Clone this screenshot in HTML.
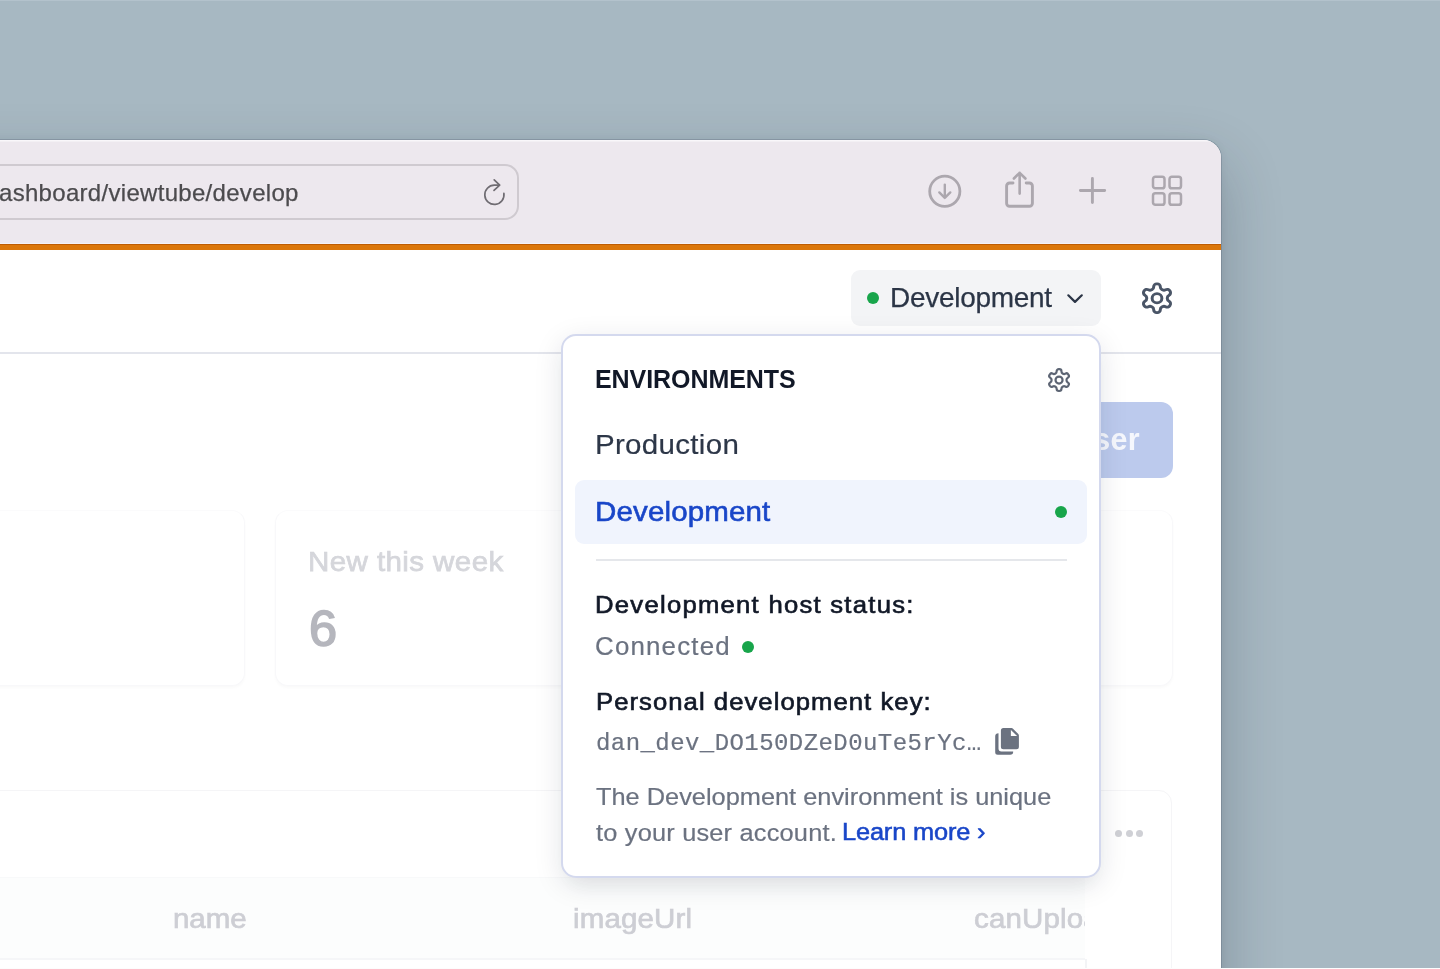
<!DOCTYPE html>
<html>
<head>
<meta charset="utf-8">
<title>Environments</title>
<style>
*{box-sizing:border-box;margin:0;padding:0}
html,body{width:1440px;height:969px;overflow:hidden}
body{background:#a7b8c2;font-family:"Liberation Sans",sans-serif;position:relative}
.t{position:absolute;white-space:pre;line-height:40px;height:40px}
svg{position:absolute;overflow:visible}
.sx{transform-origin:0 50%;transform:scaleX(1.035)}
.t{will-change:transform}
/* window: page coords inside #pg */
#win{position:absolute;left:-200px;top:140px;width:1421px;height:1000px;background:#fff;border-radius:18px 18px 0 0;
 box-shadow:0 0 0 1px rgba(60,75,90,.22),0 26px 60px 2px rgba(20,35,50,.24),0 0 10px rgba(20,35,50,.06)}
#clip{position:absolute;left:0;top:0;width:1421px;height:1000px;border-radius:18px 18px 0 0;overflow:hidden}
#pg{position:absolute;left:200px;top:-140px;width:1221px;height:1140px}
#pg>div,#pop>div{position:absolute}
#toolbar{left:-200px;top:140px;width:1421px;height:104px;background:#ede8ee;box-shadow:inset 0 1.5px 0 #f9f7fa,inset 0 -1px 0 #f4f1f5}
#urlbar{left:-200px;top:164px;width:719px;height:56px;border:2px solid #cfcad0;border-radius:14px}
#orange{left:-200px;top:244px;width:1421px;height:6px;background:#db760a;border-top:1px solid #be5b02}
#header{left:-200px;top:250px;width:1421px;height:104px;background:#fff;border-bottom:2px solid #e3e5ec}
#envbtn{left:851px;top:270px;width:250px;height:56px;border-radius:9px;background:#f3f4f6}
.dot{border-radius:50%;background:#18a54b}
#adduser{left:960px;top:402px;width:213px;height:76px;border-radius:12px;background:#bccaed}
.card{top:510px;height:176px;border-radius:13px;background:#fff;border:1.5px solid #f8f8fa;border-top-color:#fbfbfc;box-shadow:0 2px 3px rgba(0,0,0,.022)}
#tcard{left:-200px;top:790px;width:1372px;height:400px;border-radius:13px;border:1.5px solid #f5f5f7;background:#fff}
#thead{left:-200px;top:877px;width:1285px;height:83px;background:#fcfdfd;border-top:1.5px solid #f8f9fa;border-bottom:2px solid #f5f6f8;overflow:hidden}
/* popup */
#pop{left:561px;top:334px;width:540px;height:544px;border:2px solid #d4d9ee;border-radius:15px;background:#fff;
 box-shadow:0 7px 28px rgba(15,25,50,.115),0 14px 22px -6px rgba(15,25,50,.04)}
#sel{left:12px;top:144px;width:512px;height:64px;border-radius:9px;background:#f0f4fd}
#sep{left:32.5px;top:223.2px;width:471.5px;height:2px;background:#e5e7eb}
</style>
</head>
<body>
<div id="win"><div id="clip"><div id="pg">
  <div id="toolbar"></div>
  <div id="urlbar"></div>
  <div class="t" id="url" style="left:-1.2px;top:173.4px;font-size:24px;letter-spacing:.3px;color:#4c4b4e;-webkit-text-stroke:.25px #4c4b4e">ashboard/viewtube/develop</div>
  <svg style="left:481.7px;top:177.6px" width="26" height="30" viewBox="0 0 26 30" fill="none" stroke="#6f6c72" stroke-width="1.7" stroke-linecap="round" stroke-linejoin="round"><path d="M21.9 15.4A9.6 9.6 0 1 1 12.3 7.2H17"/><path d="M12.2 1.9 17.7 7.2 12 12.4"/></svg>
  <!-- toolbar icons -->
  <svg style="left:927px;top:173px" width="36" height="36" viewBox="0 0 36 36" fill="none" stroke="#aca7ae" stroke-linecap="round" stroke-linejoin="round"><circle cx="17.8" cy="18.3" r="15.1" stroke-width="2.8"/><path stroke-width="2.4" d="M17.8 11.6V24.8M12.3 19.4l5.5 5.5 5.5-5.5"/></svg>
  <svg style="left:1003px;top:169px" width="34" height="40" viewBox="0 0 34 40" fill="none" stroke="#aca7ae" stroke-linecap="round" stroke-linejoin="round"><path stroke-width="2.9" d="M10 14H6.6a3 3 0 0 0-3 3v17.3a3 3 0 0 0 3 3h19.8a3 3 0 0 0 3-3V17a3 3 0 0 0-3-3H23.2"/><path stroke-width="2.6" d="M16.65 24.6V3.9M10.9 9.5l5.75-5.7 5.75 5.7"/></svg>
  <svg style="left:1078px;top:176px" width="30" height="30" viewBox="0 0 30 30" fill="none" stroke="#aca7ae" stroke-width="2.9" stroke-linecap="round"><path d="M2.4 14.5h24.3M14.4 2.5v24"/></svg>
  <svg style="left:1151px;top:175px" width="32" height="32" viewBox="0 0 32 32" fill="none" stroke="#aca7ae" stroke-width="2.5"><rect x="2" y="1.8" width="11.5" height="11.5" rx="2.4"/><rect x="18.5" y="1.8" width="11.5" height="11.5" rx="2.4"/><rect x="2" y="18.3" width="11.5" height="11.5" rx="2.4"/><rect x="18.5" y="18.3" width="11.5" height="11.5" rx="2.4"/></svg>
  <div id="orange"></div>
  <div id="header"></div>
  <div id="envbtn"></div>
  <div class="dot" style="left:867px;top:292px;width:12px;height:12px"></div>
  <div class="t" id="hdev" style="left:890.3px;top:278.1px;font-size:28px;letter-spacing:-0.29px;color:#2b3546;-webkit-text-stroke:.25px #2b3546">Development</div>
  <svg style="left:1065px;top:290px" width="20" height="16" viewBox="0 0 20 16" fill="none" stroke="#2b3546" stroke-width="2.2" stroke-linecap="round" stroke-linejoin="round"><path d="M3.3 5.3 10 11.9l6.8-6.6"/></svg>
  <svg id="gearbig" preserveAspectRatio="none" style="left:1138.90px;top:280.50px" width="36.0" height="34.5" viewBox="0 0 24 24" fill="none" stroke="#4a5567" stroke-width="2" stroke-linecap="round" stroke-linejoin="round"><path d="M12.22 2h-.44a2 2 0 0 0-2 2v.18a2 2 0 0 1-1 1.73l-.43.25a2 2 0 0 1-2 0l-.15-.08a2 2 0 0 0-2.73.73l-.22.38a2 2 0 0 0 .73 2.73l.15.1a2 2 0 0 1 1 1.72v.51a2 2 0 0 1-1 1.74l-.15.09a2 2 0 0 0-.73 2.73l.22.38a2 2 0 0 0 2.73.73l.15-.08a2 2 0 0 1 2 0l.43.25a2 2 0 0 1 1 1.73V20a2 2 0 0 0 2 2h.44a2 2 0 0 0 2-2v-.18a2 2 0 0 1 1-1.73l.43-.25a2 2 0 0 1 2 0l.15.08a2 2 0 0 0 2.73-.73l.22-.39a2 2 0 0 0-.73-2.73l-.15-.08a2 2 0 0 1-1-1.74v-.5a2 2 0 0 1 1-1.74l.15-.09a2 2 0 0 0 .73-2.73l-.22-.38a2 2 0 0 0-2.73-.73l-.15.08a2 2 0 0 1-2 0l-.43-.25a2 2 0 0 1-1-1.73V4a2 2 0 0 0-2-2z"/><circle cx="12" cy="12" r="3.25"/></svg>

  <!-- page content (faded) -->
  <div id="adduser"></div>
  <div class="t" id="adduser_t" style="left:939.2px;top:419.1px;width:201px;text-align:right;font-size:30.5px;letter-spacing:.3px;font-weight:700;color:#f5f7fd">Add user</div>
  <div class="card" style="left:-200px;width:445px"></div>
  <div class="card" style="left:275px;width:434px"></div>
  <div class="card" style="left:739px;width:434px"></div>
  <div class="t sx" id="ntw" style="left:308.2px;top:540.8px;font-size:28.5px;letter-spacing:0.41px;color:#d5d6db;-webkit-text-stroke:.75px #d5d6db">New this week</div>
  <div class="t" id="six" style="left:308.8px;top:609.3px;font-size:50.5px;color:#b5b6bd;-webkit-text-stroke:1.6px #b5b6bd">6</div>
  <div id="tcard"></div>
  <div class="dot" style="left:1115px;top:829.9px;width:7px;height:7px;background:#cfd0d5"></div>
  <div class="dot" style="left:1125.6px;top:829.9px;width:7px;height:7px;background:#cfd0d5"></div>
  <div class="dot" style="left:1136.2px;top:829.9px;width:7px;height:7px;background:#cfd0d5"></div>
  <div style="left:1085px;top:959px;width:1.5px;height:20px;background:#f3f4f6"></div>
  <div id="thead">
    <div class="t sx" id="th1" style="left:372.6px;top:19.6px;font-size:28.5px;letter-spacing:-0.08px;color:#cdced4;-webkit-text-stroke:.7px #cdced4">name</div>
    <div class="t sx" id="th2" style="left:772.6px;top:20.2px;font-size:28.5px;letter-spacing:0.15px;color:#cdced4;-webkit-text-stroke:.7px #cdced4">imageUrl</div>
    <div class="t sx" id="th3" style="left:1173.8px;top:20.2px;font-size:28.5px;letter-spacing:0.15px;color:#cdced4;-webkit-text-stroke:.7px #cdced4">canUpload</div>
  </div>

  <!-- popup -->
  <div id="pop">
    <div class="t" id="envs" style="left:32.0px;top:23.1px;font-size:25px;font-weight:700;letter-spacing:-0.07px;color:#111827">ENVIRONMENTS</div>
    <svg id="gearsm" preserveAspectRatio="none" style="left:482.95px;top:30.80px" width="26.1" height="26.2" viewBox="0 0 24 24" fill="none" stroke="#5d6574" stroke-width="2" stroke-linecap="round" stroke-linejoin="round"><path d="M12.22 2h-.44a2 2 0 0 0-2 2v.18a2 2 0 0 1-1 1.73l-.43.25a2 2 0 0 1-2 0l-.15-.08a2 2 0 0 0-2.73.73l-.22.38a2 2 0 0 0 .73 2.73l.15.1a2 2 0 0 1 1 1.72v.51a2 2 0 0 1-1 1.74l-.15.09a2 2 0 0 0-.73 2.73l.22.38a2 2 0 0 0 2.73.73l.15-.08a2 2 0 0 1 2 0l.43.25a2 2 0 0 1 1 1.73V20a2 2 0 0 0 2 2h.44a2 2 0 0 0 2-2v-.18a2 2 0 0 1 1-1.73l.43-.25a2 2 0 0 1 2 0l.15.08a2 2 0 0 0 2.73-.73l.22-.39a2 2 0 0 0-.73-2.73l-.15-.08a2 2 0 0 1-1-1.74v-.5a2 2 0 0 1 1-1.74l.15-.09a2 2 0 0 0 .73-2.73l-.22-.38a2 2 0 0 0-2.73-.73l-.15.08a2 2 0 0 1-2 0l-.43-.25a2 2 0 0 1-1-1.73V4a2 2 0 0 0-2-2z"/><circle cx="12" cy="12" r="3.25"/></svg>
    <div class="t sx" id="prod" style="left:32.2px;top:87.5px;font-size:28.5px;letter-spacing:0.30px;color:#2d3748;-webkit-text-stroke:.2px #2d3748">Production</div>
    <div id="sel"></div>
    <div class="t sx" id="devsel" style="left:32.1px;top:155.2px;font-size:28.5px;letter-spacing:0.14px;color:#1946c8;-webkit-text-stroke:.6px #1946c8">Development</div>
    <div class="dot" style="left:492px;top:170px;width:12px;height:12px"></div>
    <div id="sep"></div>
    <div class="t sx" id="hs" style="left:31.5px;top:249.0px;font-size:24.8px;letter-spacing:1.21px;color:#111827;-webkit-text-stroke:.65px #111827">Development host status:</div>
    <div class="t sx" id="conn" style="left:31.5px;top:289.5px;font-size:25px;letter-spacing:1.15px;color:#6b7280;-webkit-text-stroke:.2px #6b7280">Connected</div>
    <div class="dot" style="left:179px;top:304.7px;width:12.2px;height:12.2px"></div>
    <div class="t sx" id="pk" style="left:32.6px;top:345.8px;font-size:24.8px;letter-spacing:1.01px;color:#111827;-webkit-text-stroke:.65px #111827">Personal development key:</div>
    <div class="t" id="key" style="left:32.6px;top:387.6px;font-family:'Liberation Mono',monospace;font-size:24px;letter-spacing:0.43px;color:#6b7280;-webkit-text-stroke:.2px #6b7280">dan_dev_DO150DZeD0uTe5rYc…</div>
    <svg id="copy" style="left:419px;top:380px" width="50" height="50" viewBox="0 0 50 50"><path fill="#6b7280" d="M21.4 12.1H29.6a2 2 0 0 1 1.4.6L36.3 18.1a2 2 0 0 1 .6 1.4V30.8a2.5 2.5 0 0 1-2.5 2.5H21.4a2.5 2.5 0 0 1-2.5-2.5V14.6a2.5 2.5 0 0 1 2.5-2.5Z"/><path fill="#fff" d="M28.9 13.9V19.9H35.1Z"/><path fill="#6b7280" d="M16.5 17.3a3.3 3.3 0 0 0-3.3 3.3V36.3a2.5 2.5 0 0 0 2.5 2.5H28.1a3.1 3.1 0 0 0 3.1-3.2H19.5a3 3 0 0 1-3-3Z"/></svg>
    <div class="t sx" id="d1" style="left:33.0px;top:441.3px;font-size:24.5px;letter-spacing:0.00px;color:#6b7280;-webkit-text-stroke:.2px #6b7280">The Development environment is unique</div>
    <div class="t sx" id="d2" style="left:33.0px;top:477.3px;font-size:24.5px;letter-spacing:0.19px;color:#6b7280;-webkit-text-stroke:.2px #6b7280">to your user account.</div>
    <div class="t sx" id="lm" style="left:279.0px;top:476.3px;font-size:24.5px;letter-spacing:-0.14px;color:#1946c8;-webkit-text-stroke:.55px #1946c8">Learn more ›</div>
  </div>
</div></div></div>
<div style="position:absolute;left:0;top:0;width:1440px;height:1px;background:#b3c2cc"></div>
<div style="position:absolute;left:0;top:968px;width:1440px;height:1px;background:#fdfdfd"></div>
</body>
</html>
